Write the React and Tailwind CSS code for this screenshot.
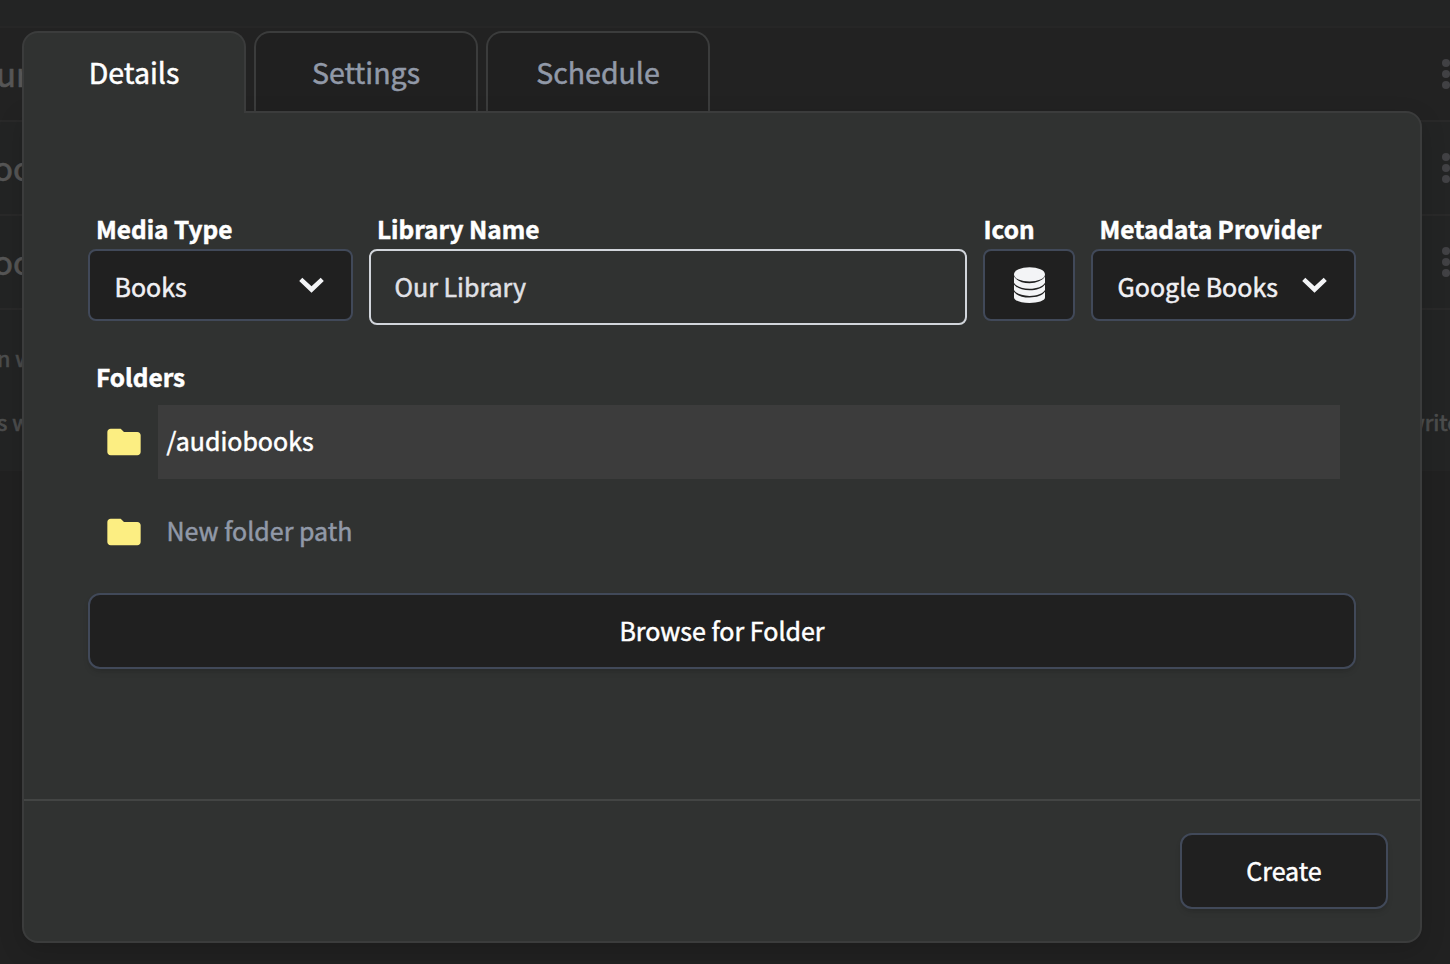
import React from 'react'

const Chevron = () => (
  <svg viewBox="0 0 25 16" className="h-4 w-[25px] shrink-0" fill="#f3f4f6">
    <path d="M0.2 3.9 L3.3 0.8 L12.5 9.2 L21.7 0.8 L24.8 3.9 L12.5 15.8 Z" />
  </svg>
)

const Database = () => (
  <svg viewBox="0 0 31 36" className="h-9 w-[31px]" fill="#f3f4f6">
    <ellipse cx="15.5" cy="7.4" rx="15.5" ry="7.2" />
    <path d="M0 9.6 C2.5 13.6 8.5 16.2 15.5 16.2 S28.5 13.6 31 9.6 V15.7 C29 19.4 23 21.7 15.5 21.7 S2 19.4 0 15.7 Z" />
    <path d="M0 17.4 C2.5 21.1 8.5 23.3 15.5 23.3 S28.5 21.1 31 17.4 V23.1 C29 26.7 23 28.9 15.5 28.9 S2 26.7 0 23.1 Z" />
    <path d="M0 24.8 C2.5 28.5 8.5 30.5 15.5 30.5 S28.5 28.5 31 24.8 V30.6 C31 33.8 24 36 15.5 36 S0 33.8 0 30.6 Z" />
  </svg>
)

const Folder = () => (
  <svg viewBox="0 0 24 24" className="size-10 shrink-0" fill="#fcee82">
    <path d="M10 4H4c-1.1 0-1.99.9-1.99 2L2 18c0 1.1.9 2 2 2h16c1.1 0 2-.9 2-2V8c0-1.1-.9-2-2-2h-8l-2-2z" />
  </svg>
)

const Dots = () => (
  <svg viewBox="0 0 8 30" className="h-[30px] w-2 shrink-0" fill="#414144">
    <circle cx="4" cy="4" r="4" />
    <circle cx="4" cy="15" r="4" />
    <circle cx="4" cy="26" r="4" />
  </svg>
)

const Row = ({ text, className, textClass }) => (
  <div className={`flex h-[94px] items-center justify-between border-b-2 border-[#292929] ${className}`}>
    <span className={`pb-0.5 text-[33px] leading-[48px] whitespace-nowrap text-[#565656] [-webkit-text-stroke:0.7px] ${textClass}`}>{text}</span>
    <Dots />
  </div>
)

const Field = ({ label, className, labelClass = 'pl-2', children }) => (
  <div className={className}>
    <div className={`h-[38px] text-[24.4px] leading-9 font-bold whitespace-nowrap ${labelClass}`}>{label}</div>
    {children}
  </div>
)

const Select = ({ value }) => (
  <button className="flex h-[72px] w-full items-center justify-between rounded-lg border-2 border-[#414959] bg-[#202020] pr-[27.5px] pl-[24.5px] text-[#f0f0f4]">
    <span className="pt-0.5 text-[25px] leading-8 whitespace-nowrap">{value}</span>
    <Chevron />
  </button>
)

const Tab = ({ label, active }) => (
  <div
    className={
      active
        ? 'z-10 flex h-[82px] w-56 justify-center rounded-t-2xl border-2 border-b-0 border-[#3b3c3c] bg-[#303231] pt-4 text-[28.5px] leading-[46px] text-white'
        : 'flex h-20 w-56 justify-center rounded-t-2xl border-2 border-b-0 border-[#3b3c3c] bg-[#202020] pt-4 text-[28.5px] leading-[46px] text-[#9199a8]'
    }
  >
    {label}
  </div>
)

export default function App() {
  return (
    <div className="relative h-[964px] w-[1450px] overflow-hidden bg-[#212121] font-['Noto_Sans_CJK_SC',sans-serif]">
      <div className="flex flex-col">
        <div className="h-7 border-b-2 border-[#262626] bg-[#232424]" />
        <Row text="ur" className="bg-[#222222]" textClass="-ml-1" />
        <Row text="oo" className="bg-[#232424]" textClass="-ml-[7px]" />
        <Row text="oo" className="bg-[#232424]" textClass="-ml-[7px]" />
        <div className="h-[161px] border-b border-[#242424] bg-[#232424] text-[22px] leading-8 text-[#4c4d4d] [-webkit-text-stroke:0.7px]">
          <div className="h-16 pt-[31px]">
            <span className="-ml-[3px]">n w</span>
          </div>
          <div className="flex justify-between pt-[31px]">
            <span className="-ml-[3px]">s w</span>
            <span className="w-[43px] whitespace-nowrap">write</span>
          </div>
        </div>
      </div>

      <div className="absolute top-[31px] left-[22px] flex h-[912px] w-[1400px] flex-col text-white [-webkit-text-stroke:0.5px]">
        <div className="flex h-20 gap-2">
          <Tab label="Details" active />
          <Tab label="Settings" />
          <Tab label="Schedule" />
        </div>
        <div className="flex flex-1 flex-col rounded-2xl rounded-tl-none border-2 border-[#3b3c3c] bg-[#303231] shadow-[0_8px_24px_rgba(0,0,0,0.15)]">
          <div className="flex h-[686px] flex-col px-16 pt-[98px]">
            <div className="flex gap-4">
              <Field label="Media Type" className="w-[265px]">
                <Select value="Books" />
              </Field>
              <Field label="Library Name" className="w-[598px]">
                <div className="h-[76px] rounded-lg border-2 border-[#d1d5db] bg-[#303231] pt-[19px] pl-[23.5px] text-[25px] leading-8 text-[#e0e1e6]">Our Library</div>
              </Field>
              <Field label="Icon" className="w-[92px]" labelClass="pl-[0.5px]">
                <button className="flex h-[72px] w-full items-center justify-center rounded-lg border-2 border-[#414959] bg-[#202020]">
                  <Database />
                </button>
              </Field>
              <Field label="Metadata Provider" className="w-[265px]" labelClass="pl-[8.5px]">
                <Select value="Google Books" />
              </Field>
            </div>
            <div className="mt-8 h-12 pl-2 text-[24.4px] leading-10 font-bold">Folders</div>
            <div className="flex h-[74px] items-center pl-[15.5px]">
              <Folder />
              <div className="ml-[14.5px] h-full w-[1182px] bg-[#3c3c3c] pt-[19px] pl-[8.5px] text-[25px] leading-8">/audiobooks</div>
            </div>
            <div className="mt-4 flex h-[74px] items-center pl-[15.5px]">
              <Folder />
              <div className="ml-[14.5px] h-full pt-[19px] pl-[8.5px] text-[25px] leading-8 text-[#9199a8]">New folder path</div>
            </div>
            <button className="mt-6 h-[76px] w-[1268px] rounded-xl border-2 border-[#414959] bg-[#202020] pb-0.5 text-[25px] leading-8 shadow-md">Browse for Folder</button>
          </div>
          <div className="flex flex-1 justify-end border-t-2 border-[#434544] pt-8 pr-8">
            <button className="h-[76px] w-52 rounded-xl border-2 border-[#414959] bg-[#202020] pb-0.5 text-[25px] leading-8 shadow-md">Create</button>
          </div>
        </div>
      </div>
    </div>
  )
}
